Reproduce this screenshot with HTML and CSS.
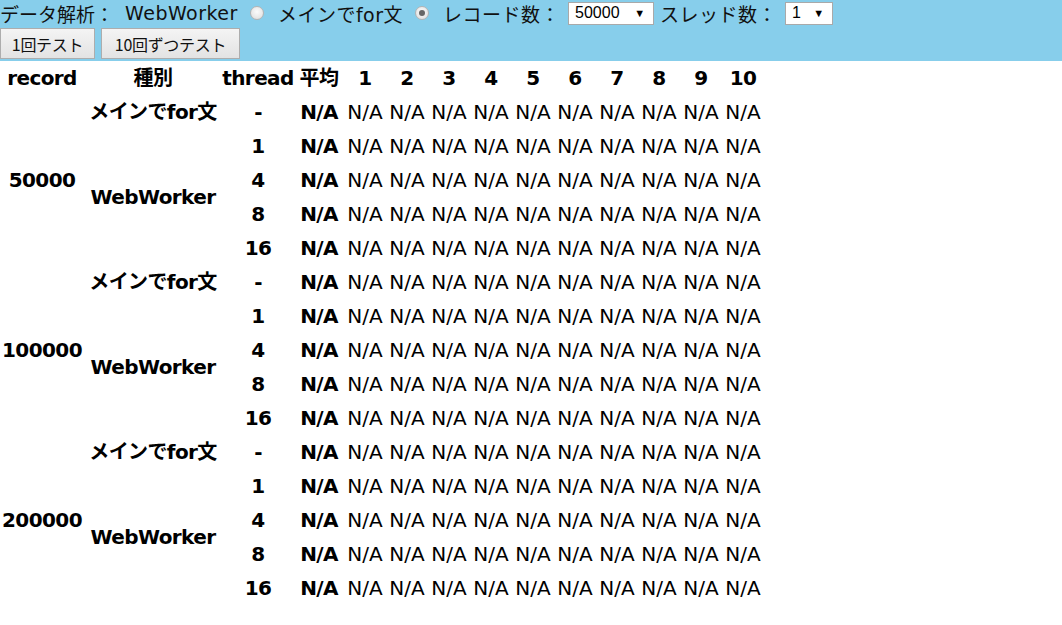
FILE: index.html
```html
<!DOCTYPE html>
<html lang="ja">
<head>
<meta charset="utf-8">
<link rel="stylesheet" href="styles.css">
</head>
<body>
<div class="top">
  <div class="line1">
    <span class="lbl">データ解析：</span>
    <span class="opt">WebWorker</span>
    <span class="radio"></span>
    <span class="opt">メインでfor文</span>
    <span class="radio checked"></span>
    <span class="opt">レコード数：</span>
    <span class="select w1"><span>50000</span><span class="arr">▼</span></span>
    <span class="opt">スレッド数：</span>
    <span class="select w2"><span>1</span><span class="arr">▼</span></span>
  </div>
  <div class="line2">
    <button class="btn b1">1回テスト</button>
    <button class="btn b2">10回ずつテスト</button>
  </div>
</div>
<table class="res">
  <colgroup>
    <col class="c-rec"><col class="c-kind"><col class="c-th"><col class="c-avg">
    <col class="c-n"><col class="c-n"><col class="c-n"><col class="c-n"><col class="c-n">
    <col class="c-n"><col class="c-n"><col class="c-n"><col class="c-n"><col class="c-n">
  </colgroup>
  <thead>
    <tr><th>record</th><th>種別</th><th>thread</th><th>平均</th><th>1</th><th>2</th><th>3</th><th>4</th><th>5</th><th>6</th><th>7</th><th>8</th><th>9</th><th>10</th></tr>
  </thead>
  <tbody>
    <tr><td rowspan="5" class="b">50000</td><td class="b">メインでfor文</td><td class="b">-</td><td class="b">N/A</td><td>N/A</td><td>N/A</td><td>N/A</td><td>N/A</td><td>N/A</td><td>N/A</td><td>N/A</td><td>N/A</td><td>N/A</td><td>N/A</td></tr>
    <tr><td rowspan="4" class="b">WebWorker</td><td class="b">1</td><td class="b">N/A</td><td>N/A</td><td>N/A</td><td>N/A</td><td>N/A</td><td>N/A</td><td>N/A</td><td>N/A</td><td>N/A</td><td>N/A</td><td>N/A</td></tr>
    <tr><td class="b">4</td><td class="b">N/A</td><td>N/A</td><td>N/A</td><td>N/A</td><td>N/A</td><td>N/A</td><td>N/A</td><td>N/A</td><td>N/A</td><td>N/A</td><td>N/A</td></tr>
    <tr><td class="b">8</td><td class="b">N/A</td><td>N/A</td><td>N/A</td><td>N/A</td><td>N/A</td><td>N/A</td><td>N/A</td><td>N/A</td><td>N/A</td><td>N/A</td><td>N/A</td></tr>
    <tr><td class="b">16</td><td class="b">N/A</td><td>N/A</td><td>N/A</td><td>N/A</td><td>N/A</td><td>N/A</td><td>N/A</td><td>N/A</td><td>N/A</td><td>N/A</td><td>N/A</td></tr>
    <tr><td rowspan="5" class="b">100000</td><td class="b">メインでfor文</td><td class="b">-</td><td class="b">N/A</td><td>N/A</td><td>N/A</td><td>N/A</td><td>N/A</td><td>N/A</td><td>N/A</td><td>N/A</td><td>N/A</td><td>N/A</td><td>N/A</td></tr>
    <tr><td rowspan="4" class="b">WebWorker</td><td class="b">1</td><td class="b">N/A</td><td>N/A</td><td>N/A</td><td>N/A</td><td>N/A</td><td>N/A</td><td>N/A</td><td>N/A</td><td>N/A</td><td>N/A</td><td>N/A</td></tr>
    <tr><td class="b">4</td><td class="b">N/A</td><td>N/A</td><td>N/A</td><td>N/A</td><td>N/A</td><td>N/A</td><td>N/A</td><td>N/A</td><td>N/A</td><td>N/A</td><td>N/A</td></tr>
    <tr><td class="b">8</td><td class="b">N/A</td><td>N/A</td><td>N/A</td><td>N/A</td><td>N/A</td><td>N/A</td><td>N/A</td><td>N/A</td><td>N/A</td><td>N/A</td><td>N/A</td></tr>
    <tr><td class="b">16</td><td class="b">N/A</td><td>N/A</td><td>N/A</td><td>N/A</td><td>N/A</td><td>N/A</td><td>N/A</td><td>N/A</td><td>N/A</td><td>N/A</td><td>N/A</td></tr>
    <tr><td rowspan="5" class="b">200000</td><td class="b">メインでfor文</td><td class="b">-</td><td class="b">N/A</td><td>N/A</td><td>N/A</td><td>N/A</td><td>N/A</td><td>N/A</td><td>N/A</td><td>N/A</td><td>N/A</td><td>N/A</td><td>N/A</td></tr>
    <tr><td rowspan="4" class="b">WebWorker</td><td class="b">1</td><td class="b">N/A</td><td>N/A</td><td>N/A</td><td>N/A</td><td>N/A</td><td>N/A</td><td>N/A</td><td>N/A</td><td>N/A</td><td>N/A</td><td>N/A</td></tr>
    <tr><td class="b">4</td><td class="b">N/A</td><td>N/A</td><td>N/A</td><td>N/A</td><td>N/A</td><td>N/A</td><td>N/A</td><td>N/A</td><td>N/A</td><td>N/A</td><td>N/A</td></tr>
    <tr><td class="b">8</td><td class="b">N/A</td><td>N/A</td><td>N/A</td><td>N/A</td><td>N/A</td><td>N/A</td><td>N/A</td><td>N/A</td><td>N/A</td><td>N/A</td><td>N/A</td></tr>
    <tr><td class="b">16</td><td class="b">N/A</td><td>N/A</td><td>N/A</td><td>N/A</td><td>N/A</td><td>N/A</td><td>N/A</td><td>N/A</td><td>N/A</td><td>N/A</td><td>N/A</td></tr>
  </tbody>
</table>
</body>
</html>
```
FILE: styles.css
```css
html, body {
  margin: 0;
  padding: 0;
  background: #fff;
  color: #000;
  font-family: "DejaVu Sans", "Noto Sans CJK JP", sans-serif;
}
.top {
  background: #87ceeb;
  height: 61px;
  box-sizing: border-box;
}
.line1 {
  display: flex;
  align-items: center;
  height: 26px;
  font-size: 19px;
  white-space: nowrap;
  color: #111;
}
.lbl { margin-right: 11px; letter-spacing: 0; }
.opt { letter-spacing: 0.5px; }
.radio {
  display: inline-block;
  box-sizing: border-box;
  width: 14px;
  height: 14px;
  border-radius: 50%;
  border: 1px solid #b4b4b4;
  background: radial-gradient(circle at 50% 40%, #fbfbfb, #dcdcdc);
  margin: 0 14px 0 12px;
  position: relative;
}
.radio.checked::after {
  content: "";
  position: absolute;
  left: 3px;
  top: 3px;
  width: 6px;
  height: 6px;
  border-radius: 50%;
  background: #666;
}
.select {
  display: inline-flex;
  align-items: center;
  justify-content: space-between;
  box-sizing: border-box;
  height: 23px;
  background: #fff;
  border: 1px solid #a9a9a9;
  font-family: "Liberation Sans", Arial, sans-serif;
  font-size: 16px;
  padding: 0 8px 0 6px;
  margin: 0 6px 0 8px;
  color: #000;
}
.select.w1 { width: 86px; }
.select.w2 { width: 48px; }
.arr { font-size: 11px; }
.line2 {
  display: flex;
  gap: 6px;
  margin-top: 2px;
}
.btn {
  box-sizing: border-box;
  height: 31px;
  padding: 0;
  border: 1px solid #adadad;
  background: linear-gradient(#f4f4f4, #e3e3e3);
  font-family: "Noto Sans CJK JP", sans-serif;
  font-size: 16px;
  color: #111;
  letter-spacing: -0.3px;
}
.b1 { width: 95px; }
.b2 { width: 139px; }
.res {
  border-collapse: collapse;
  border-spacing: 0;
  table-layout: fixed;
  width: 764px;
  font-size: 20px;
}
.c-rec { width: 84px; }
.c-kind { width: 138px; }
.c-th { width: 72px; }
.c-avg { width: 50px; }
.c-n { width: 42px; }
.res th, .res td {
  padding: 0;
  height: 34px;
  line-height: 34px;
  text-align: center;
  vertical-align: middle;
  white-space: nowrap;
  overflow: visible;
}
.res th { font-weight: bold; }
.res td { font-weight: normal; }
.res td.b { font-weight: bold; }
.res td.b, .res th { letter-spacing: -0.6px; }
```
